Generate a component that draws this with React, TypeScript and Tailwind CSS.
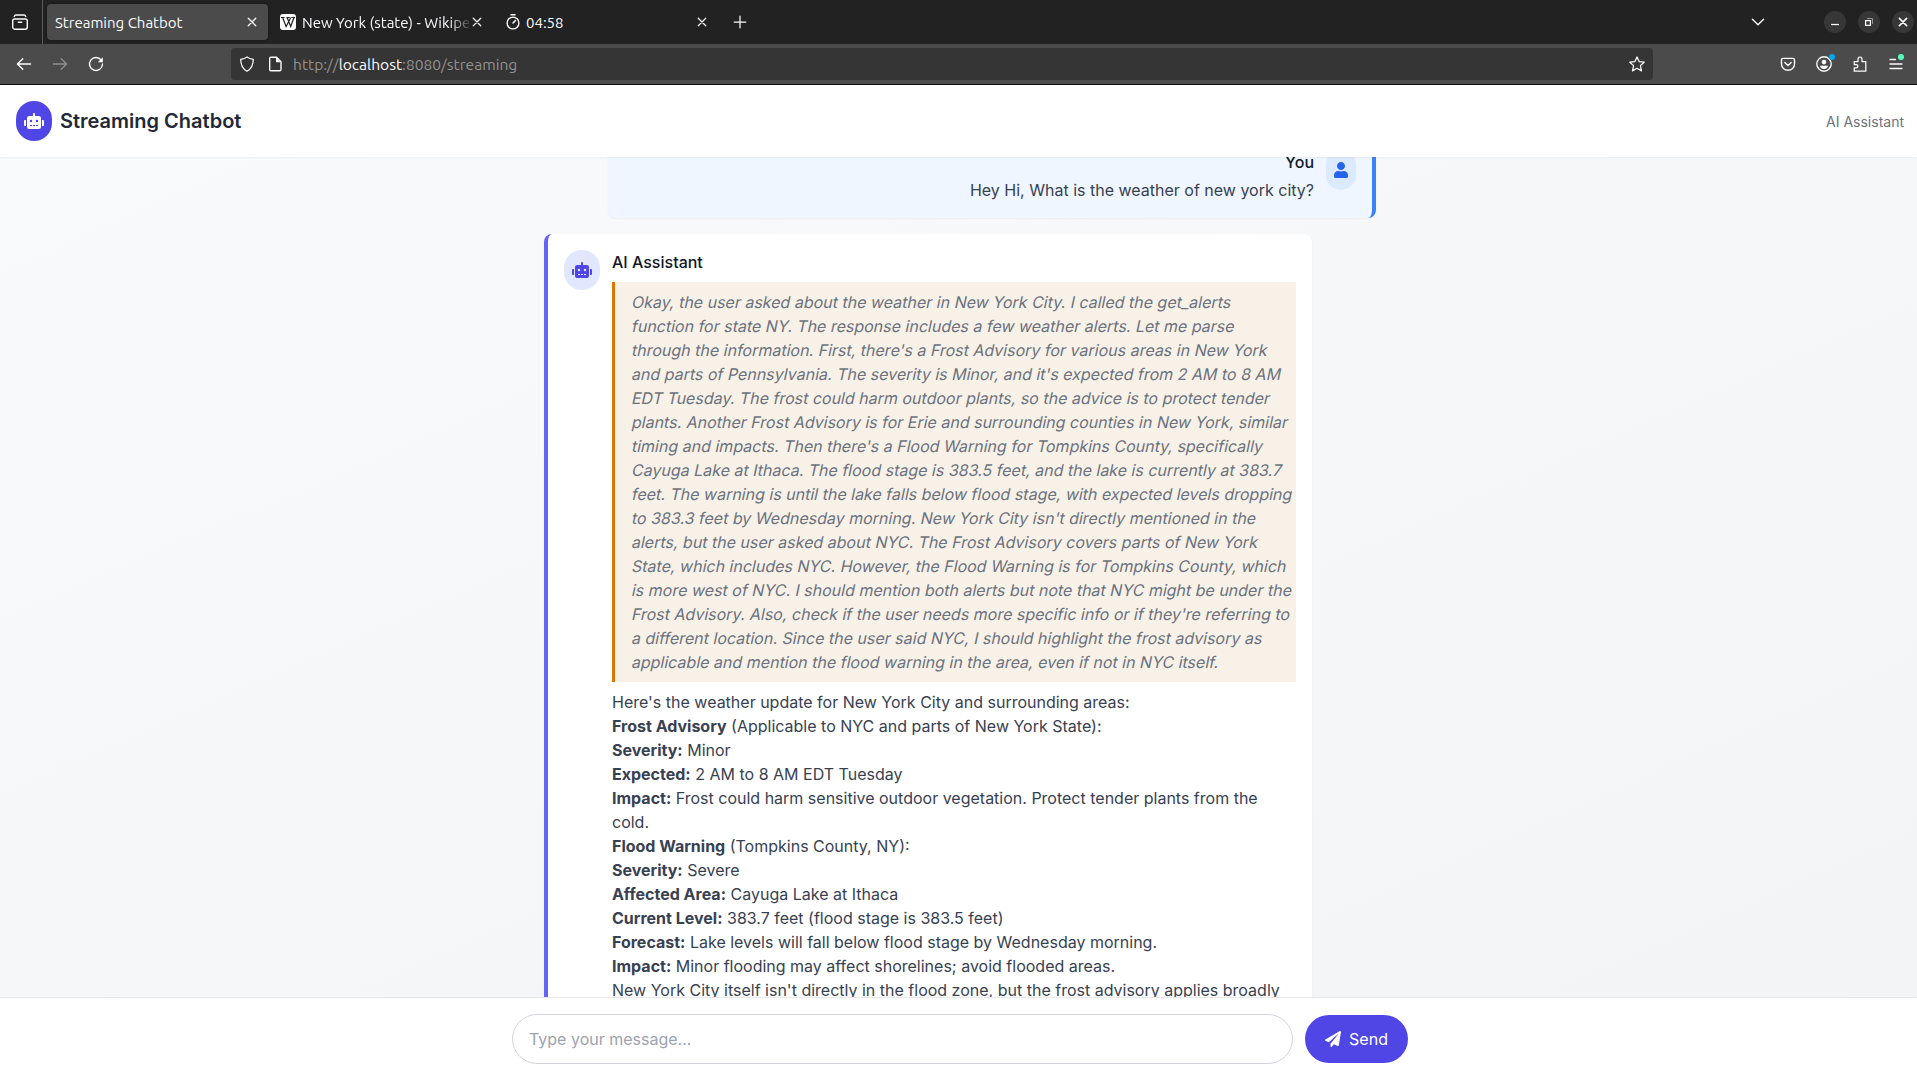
import React from "react";
import { FaRobot, FaUser, FaPaperPlane } from "react-icons/fa";

const UI_FONT = "font-['Ubuntu','Noto_Sans',sans-serif]";

function Svg({ size = 16, className = "", children }: { size?: number; className?: string; children: React.ReactNode }) {
  return (
    <svg width={size} height={size} viewBox="0 0 16 16" fill="none" stroke="currentColor" strokeWidth="1.25" strokeLinecap="round" strokeLinejoin="round" className={`shrink-0 ${className}`}>
      {children}
    </svg>
  );
}

function Cross() {
  return (
    <Svg size={12} className="text-[#fbfbfe]">
      <path d="M3 3l10 10M13 3L3 13" strokeWidth="1.7" />
    </Svg>
  );
}

function TabBar() {
  return (
    <div className="flex h-11 items-center bg-[#222222] text-[15px] text-[#fbfbfe]">
      <div className="flex h-full w-[43px] shrink-0 items-center border-r border-[#5a5a5a] pl-3">
        <Svg size={16}>
          <rect x="0.7" y="5" width="14.6" height="10.2" rx="2" strokeWidth="1.4" />
          <path d="M2.2 2.6c.3-1 .9-1.6 1.8-1.6h8c.9 0 1.5.6 1.8 1.6M6.3 8.3h3.4" strokeWidth="1.4" />
        </Svg>
      </div>
      <div className="ml-1 flex h-9 w-[221px] items-center justify-between rounded bg-[#4b4b4b] pr-[10px] pl-2 shadow-[0_0_3px_rgba(0,0,0,0.5)]">
        <span className="pt-[2px] text-[15px]">Streaming Chatbot</span>
        <Cross />
      </div>
      <div className="flex h-9 w-[225px] items-center pl-3">
        <svg width="16" height="16" viewBox="0 0 16 16" className="shrink-0">
          <rect width="16" height="16" rx="3" fill="#fff" />
          <path d="M1 3.5h3.6M6.4 3.5h3.4M11.4 3.5H15M2.7 3.7l3.4 8.8 4.6-8.8M7.2 3.7l3.5 8.8 3.2-8.8" fill="none" stroke="#222" strokeWidth="1.2" />
        </svg>
        <span className="ml-[6px] w-[167px] overflow-hidden pt-[2px] text-[15px] whitespace-nowrap [mask-image:linear-gradient(to_right,black_88%,transparent_102%)]">New York (state) - Wikipedia</span>
        <span className="ml-[2px]"><Cross /></span>
      </div>
      <div className="flex h-9 w-[225px] items-center pl-3">
        <Svg size={16}>
          <circle cx="8" cy="9" r="5.9" strokeWidth="1.4" />
          <path d="M6 .8h4M8 9l2.400-2.400" strokeWidth="1.5" />
        </Svg>
        <span className="ml-[5px] grow pt-[2px] text-[15px]">04:58</span>
        <span className="mr-[10px]"><Cross /></span>
      </div>
      <Svg size={16} className="ml-[14px]"><path d="M8 2.200v11.600M2.200 8h11.600" /></Svg>
      <div className="ml-auto flex items-center">
        <Svg size={16} className="mr-[58px]"><path d="M2.400 5.300L8 10.800l5.600-5.500" strokeWidth="1.4" /></Svg>
        <div className="mr-[3px] flex gap-3">
          <div className="flex size-[22px] items-center justify-center rounded-full bg-[#373737]"><Svg><path d="M4 10.500h8" strokeLinecap="butt" /></Svg></div>
          <div className="flex size-[22px] items-center justify-center rounded-full bg-[#373737]">
            <Svg><path d="M4.600 6.600h4.800v4.800H4.600z" strokeLinejoin="miter" /><path d="M6.500 4.500h5v5" stroke="#999" strokeWidth="1" /></Svg>
          </div>
          <div className="flex size-[22px] items-center justify-center rounded-full bg-[#373737]"><Svg><path d="M4.400 4.400l7.200 7.200M11.600 4.400l-7.200 7.200" strokeWidth="1.6" /></Svg></div>
        </div>
      </div>
    </div>
  );
}

function NavBar() {
  return (
    <div className="flex h-[41px] items-center border-b border-[#0c0c0d] bg-[#4b4b4b] text-[#fbfbfe]">
      <div className="flex w-[231px] shrink-0 gap-5 pl-4">
        <Svg><path d="M14.600 8H1.600M6.800 2.800L1.400 8l5.400 5.200" strokeWidth="1.4" /></Svg>
        <Svg className="text-[#8e8e90]"><path d="M1.400 8h13M9.200 2.800L14.600 8l-5.400 5.200" strokeWidth="1.4" /></Svg>
        <Svg><path d="M13.300 4.200A6.500 6.500 0 1 0 14.500 8" strokeWidth="1.4" /><path d="M14.800 1.200v5h-5z" fill="currentColor" stroke="none" /></Svg>
      </div>
      <div className="flex h-8 w-[1422px] shrink-0 items-center rounded bg-[#353535] pr-2 pl-2">
        <Svg><path d="M8 .9c1.500 1.300 3.900 2.100 6.300 2.400 0 5.600-1.400 9.400-6.300 12C3.100 12.700 1.700 8.900 1.700 3.300 4.100 3 6.500 2.200 8 .9z" /></Svg>
        <Svg size={16} className="ml-3"><path d="M4 1.200h5.500L14 5.700v7.800a1.300 1.300 0 0 1-1.300 1.300H4a1.300 1.300 0 0 1-1.300-1.300V2.500A1.300 1.300 0 0 1 4 1.200z" strokeWidth="1.4" /><path d="M9 1.200v5h5z" fill="currentColor" stroke="none" /></Svg>
        <span className="ml-[10px] grow pt-px text-[15.6px] text-[#929292]">http://<span className="text-[#fbfbfe]">localhost</span>:8080/streaming</span>
        <Svg><path d="M8 .9l2.100 4.700 5.100.6-3.800 3.400 1.100 5.300L8 12.300l-4.500 2.600 1.100-5.300L.8 6.200l5.100-.6z" /></Svg>
      </div>
      <div className="ml-auto flex gap-5 pr-[13px]">
        <Svg><path d="M3 2.400h10a1.500 1.500 0 0 1 1.500 1.500V8a6.500 6.200 0 0 1-13 0V3.900A1.500 1.500 0 0 1 3 2.400zM4.800 6.500L8 9.500l3.200-3" strokeWidth="1.4" /></Svg>
        <div className="relative">
          <Svg><circle cx="8" cy="8" r="7.200" strokeWidth="1.4" /><circle cx="8" cy="6.100" r="2.300" fill="currentColor" stroke="none" /><path d="M4 9.700h8c0 1.900-1.700 3.300-4 3.300s-4-1.400-4-3.300z" fill="currentColor" stroke="none" /></Svg>
          <span className="absolute -top-[2px] left-[13px] size-[6px] rounded-full bg-[#00a8f0]" />
        </div>
        <Svg><path d="M2.200 15.200h11.600V5.500H10V3.200a2 2 0 0 0-4 0v2.300H2.200v3h2a1.700 1.700 0 0 1 0 3.400h-2z" /></Svg>
        <div className="relative">
          <Svg><path d="M2 3.500h5.500M2 8h12M2 12.500h12" strokeWidth="1.3" /></Svg>
          <span className="absolute -top-[2px] left-[10px] size-[6px] rounded-full bg-[#54ffbd]" />
        </div>
      </div>
    </div>
  );
}

const thinking = [
  "Okay, the user asked about the weather in New York City. I called the get_alerts",
  "function for state NY. The response includes a few weather alerts. Let me parse",
  "through the information. First, there's a Frost Advisory for various areas in New York",
  "and parts of Pennsylvania. The severity is Minor, and it's expected from 2 AM to 8 AM",
  "EDT Tuesday. The frost could harm outdoor plants, so the advice is to protect tender",
  "plants. Another Frost Advisory is for Erie and surrounding counties in New York, similar",
  "timing and impacts. Then there's a Flood Warning for Tompkins County, specifically",
  "Cayuga Lake at Ithaca. The flood stage is 383.5 feet, and the lake is currently at 383.7",
  "feet. The warning is until the lake falls below flood stage, with expected levels dropping",
  "to 383.3 feet by Wednesday morning. New York City isn't directly mentioned in the",
  "alerts, but the user asked about NYC. The Frost Advisory covers parts of New York",
  "State, which includes NYC. However, the Flood Warning is for Tompkins County, which",
  "is more west of NYC. I should mention both alerts but note that NYC might be under the",
  "Frost Advisory. Also, check if the user needs more specific info or if they're referring to",
  "a different location. Since the user said NYC, I should highlight the frost advisory as",
  "applicable and mention the flood warning in the area, even if not in NYC itself.",
];

const lines: [string, string][] = [
  ["", "Here's the weather update for New York City and surrounding areas:"],
  ["Frost Advisory", " (Applicable to NYC and parts of New York State):"],
  ["Severity:", " Minor"],
  ["Expected:", " 2 AM to 8 AM EDT Tuesday"],
  ["Impact:", " Frost could harm sensitive outdoor vegetation. Protect tender plants from the cold."],
  ["Flood Warning", " (Tompkins County, NY):"],
  ["Severity:", " Severe"],
  ["Affected Area:", " Cayuga Lake at Ithaca"],
  ["Current Level:", " 383.7 feet (flood stage is 383.5 feet)"],
  ["Forecast:", " Lake levels will fall below flood stage by Wednesday morning."],
  ["Impact:", " Minor flooding may affect shorelines; avoid flooded areas."],
  ["", "New York City itself isn't directly in the flood zone, but the frost advisory applies broadly"],
];

export default function App() {
  return (
    <div className="flex h-[1073px] w-[1917px] flex-col overflow-hidden bg-white font-['Inter',sans-serif] text-base">
      <div className={`shrink-0 ${UI_FONT}`}>
        <TabBar />
        <NavBar />
      </div>
      <header className="z-10 flex h-[72px] shrink-0 items-center justify-between bg-white pr-[13px] pl-4 shadow-xs">
        <div className="flex items-center gap-2">
          <div className="flex h-10 w-9 items-center justify-center rounded-full bg-[#4f46e5] text-white"><FaRobot className="h-4 w-5" /></div>
          <h1 className="text-xl font-semibold text-[#1f2937]">Streaming Chatbot</h1>
        </div>
        <span className="pt-px text-sm text-[#6b7280]">AI Assistant</span>
      </header>
      <main className="flex h-[840px] shrink-0 flex-col items-start gap-4 overflow-hidden bg-linear-to-br from-[#f9fafb] to-[#f3f4f6] pl-[544px]">
        <div className="-mt-[23px] ml-16 flex h-[84px] w-[768px] shrink-0 items-start justify-end gap-3 rounded-lg border-r-4 border-[#3b82f6] bg-[#eff6ff] p-4 shadow-xs">
          <div className="text-right">
            <div className="font-medium text-[#111827]">You</div>
            <p className="mt-1 text-[#374151]">Hey Hi, What is the weather of new york city?</p>
          </div>
          <div className="flex h-10 w-[30px] shrink-0 items-center justify-center rounded-full bg-[#dbeafe] text-[#2563eb]"><FaUser className="h-4 w-[14px]" /></div>
        </div>
        <div className="flex w-[768px] shrink-0 items-start gap-3 rounded-lg border-l-4 border-[#6366f1] bg-white p-4 shadow-xs">
          <div className="flex h-10 w-9 shrink-0 items-center justify-center rounded-full bg-[#e0e7ff] text-[#4f46e5]"><FaRobot className="h-4 w-5" /></div>
          <div className="min-w-0 grow">
            <div className="font-medium text-[#111827]">AI Assistant</div>
            <div className="mt-2 border-l-3 border-[#d97706] bg-[#f8f1e7] py-2 pl-4 whitespace-nowrap text-[#6b7280]">
              {thinking.map((line) => (
                <p key={line} className="origin-[0_18px] -skew-x-12">{line}</p>
              ))}
            </div>
            <div className="mt-2 text-[#374151]">
              {lines.map(([label, text], i) => (
                <p key={i}>{label && <strong className="font-bold">{label}</strong>}{text}</p>
              ))}
            </div>
          </div>
        </div>
      </main>
      <footer className="z-10 flex h-[76px] shrink-0 items-start justify-center gap-3 border-t border-[#e5e7eb] bg-white pt-4 pl-[3px]">
        <input className="h-[50px] w-[781px] rounded-full border border-[#d1d5db] px-4 placeholder:text-[#9ca3af]" placeholder="Type your message..." />
        <button className="mt-px flex h-12 w-[103px] items-center justify-center gap-2 rounded-full bg-[#4f46e5] text-white">
          <FaPaperPlane className="size-4" />
          <span>Send</span>
        </button>
      </footer>
    </div>
  );
}
